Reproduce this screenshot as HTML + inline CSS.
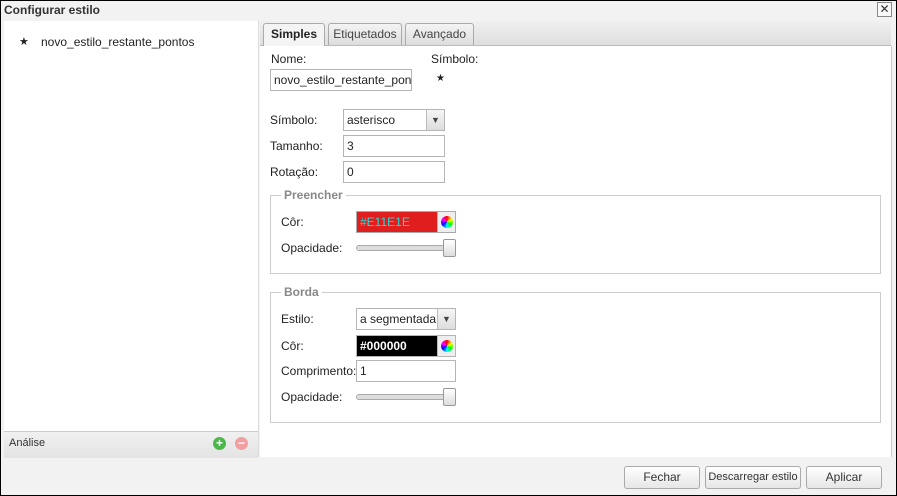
<html><head><style>
body{margin:0;width:897px;height:496px;overflow:hidden;font-family:"Liberation Sans",sans-serif;font-size:12px;color:#222}
#w{position:absolute;left:0;top:0;width:897px;height:496px;background:#f2f2f2}
#bd{position:absolute;left:0;top:0;width:895px;height:494px;border:1px solid #000;z-index:9}
.a{position:absolute}
.lbl{position:absolute;font-size:12px;color:#222}
.inp{position:absolute;background:#fff;border:1px solid #b5b5b5;box-sizing:border-box;height:22px;padding:3px 3px;font-size:12px;white-space:nowrap;overflow:hidden}
.dd{position:absolute;width:17px;height:20px;right:0;top:0;background:linear-gradient(#f5f5f5,#ddd);border-left:1px solid #bbb;font-size:9px;text-align:center;line-height:20px;color:#444}
.fs{position:absolute;border:1px solid #ccc;box-sizing:border-box}
.leg{position:absolute;top:-8px;left:10px;background:#fff;padding:0 3px;font-weight:bold;color:#888;font-size:12px}
.sl{position:absolute;height:4px;border:1px solid #aaa;border-radius:3px;background:#ddd}
.th{position:absolute;width:11px;height:16px;border:1px solid #999;background:linear-gradient(#fff,#ddd);border-radius:2px}
.cw{position:absolute;width:17px;height:20px;right:0;top:0;background:#eee;border-left:1px solid #bbb}
.cw i{position:absolute;left:3px;top:4px;width:12px;height:12px;border-radius:50%;background:conic-gradient(red,yellow,lime,cyan,blue,magenta,red)}
.btn{position:absolute;top:466px;height:23px;border:1px solid #aaa;border-radius:3px;background:linear-gradient(#fff,#e6e6e6);box-sizing:border-box;text-align:center;line-height:21px;font-size:12px;color:#333}
.tab{position:absolute;top:23px;height:22px;border:1px solid #aaa;border-bottom:none;border-radius:3px 3px 0 0;background:linear-gradient(#f4f4f4,#ddd);box-sizing:border-box;text-align:center;line-height:20px;font-size:12px;color:#444}
</style></head><body><div id="w">
<div id="bd"></div>
<div class="a" style="left:4px;top:3px;font-weight:bold;font-size:12px;color:#333">Configurar estilo</div>
<div class="a" style="left:877px;top:2px;width:13px;height:13px;border:1px solid #888;background:#f8f8f8;font-size:12px;line-height:12px;text-align:center;color:#333">✕</div>
<div class="a" style="left:4px;top:21px;width:254px;height:436px;background:#fff;border-right:1px solid #ddd"></div>
<div class="a" style="left:19px;top:35px;font-size:11px">★</div>
<div class="a" style="left:41px;top:35px;font-size:12px">novo_estilo_restante_pontos</div>
<div class="a" style="left:4px;top:431px;width:254px;height:26px;background:linear-gradient(#f0f0f0,#e4e4e4);border-top:1px solid #ccc"></div>
<div class="a" style="left:9px;top:437px;font-size:11px;color:#333">Análise</div>
<div class="a" style="left:213px;top:437px;width:13px;height:13px;border-radius:50%;background:#4cb84c;color:#fff;font-size:12px;line-height:13px;text-align:center;font-weight:bold">+</div>
<div class="a" style="left:235px;top:437px;width:13px;height:13px;border-radius:50%;background:#f0a0a0;color:#fff;font-size:12px;line-height:12px;text-align:center;font-weight:bold">−</div>
<div class="a" style="left:260px;top:21px;width:631px;height:24px;background:linear-gradient(#f0f0f0,#dedede);border-bottom:1px solid #bbb"></div>
<div class="tab" style="left:263px;width:62px;background:#f4f4f4;font-weight:bold;color:#222;height:23px">Simples</div>
<div class="tab" style="left:328px;width:74px">Etiquetados</div>
<div class="tab" style="left:405px;width:69px">Avançado</div>
<div class="a" style="left:260px;top:46px;width:631px;height:411px;background:#fff;border-right:1px solid #ccc"></div>
<div class="lbl" style="left:271px;top:52px">Nome:</div>
<div class="lbl" style="left:431px;top:52px">Símbolo:</div>
<div class="inp" style="left:270px;top:69px;width:142px">novo_estilo_restante_pon</div>
<div class="a" style="left:436px;top:73px;font-size:10px">★</div>
<div class="lbl" style="left:270px;top:113px">Símbolo:</div>
<div class="inp" style="left:343px;top:109px;width:102px">asterisco<div class="dd">▼</div></div>
<div class="lbl" style="left:270px;top:139px">Tamanho:</div>
<div class="inp" style="left:343px;top:135px;width:102px">3</div>
<div class="lbl" style="left:270px;top:165px">Rotação:</div>
<div class="inp" style="left:343px;top:161px;width:102px">0</div>
<div class="fs" style="left:270px;top:195px;width:611px;height:79px"><div class="leg">Preencher</div></div>
<div class="lbl" style="left:281px;top:215px">Côr:</div>
<div class="inp" style="left:356px;top:211px;width:100px;background:#e11e1e;color:#2dd;border-color:#aaa">#E11E1E<div class="cw"><i></i></div></div>
<div class="lbl" style="left:281px;top:241px">Opacidade:</div>
<div class="sl" style="left:356px;top:245px;width:96px"></div><div class="th" style="left:443px;top:239px"></div>
<div class="fs" style="left:270px;top:292px;width:611px;height:131px"><div class="leg">Borda</div></div>
<div class="lbl" style="left:281px;top:312px">Estilo:</div>
<div class="inp" style="left:356px;top:308px;width:100px">a segmentada<div class="dd">▼</div></div>
<div class="lbl" style="left:281px;top:339px">Côr:</div>
<div class="inp" style="left:356px;top:335px;width:100px;background:#000;color:#fff;font-weight:bold">#000000<div class="cw"><i></i></div></div>
<div class="lbl" style="left:281px;top:364px">Comprimento:</div>
<div class="inp" style="left:356px;top:360px;width:100px">1</div>
<div class="lbl" style="left:281px;top:390px">Opacidade:</div>
<div class="sl" style="left:356px;top:394px;width:96px"></div><div class="th" style="left:443px;top:388px"></div>
<div class="btn" style="left:624px;width:76px">Fechar</div>
<div class="btn" style="left:705px;width:96px;font-size:11px">Descarregar estilo</div>
<div class="btn" style="left:806px;width:76px">Aplicar</div>
</div></body></html>
